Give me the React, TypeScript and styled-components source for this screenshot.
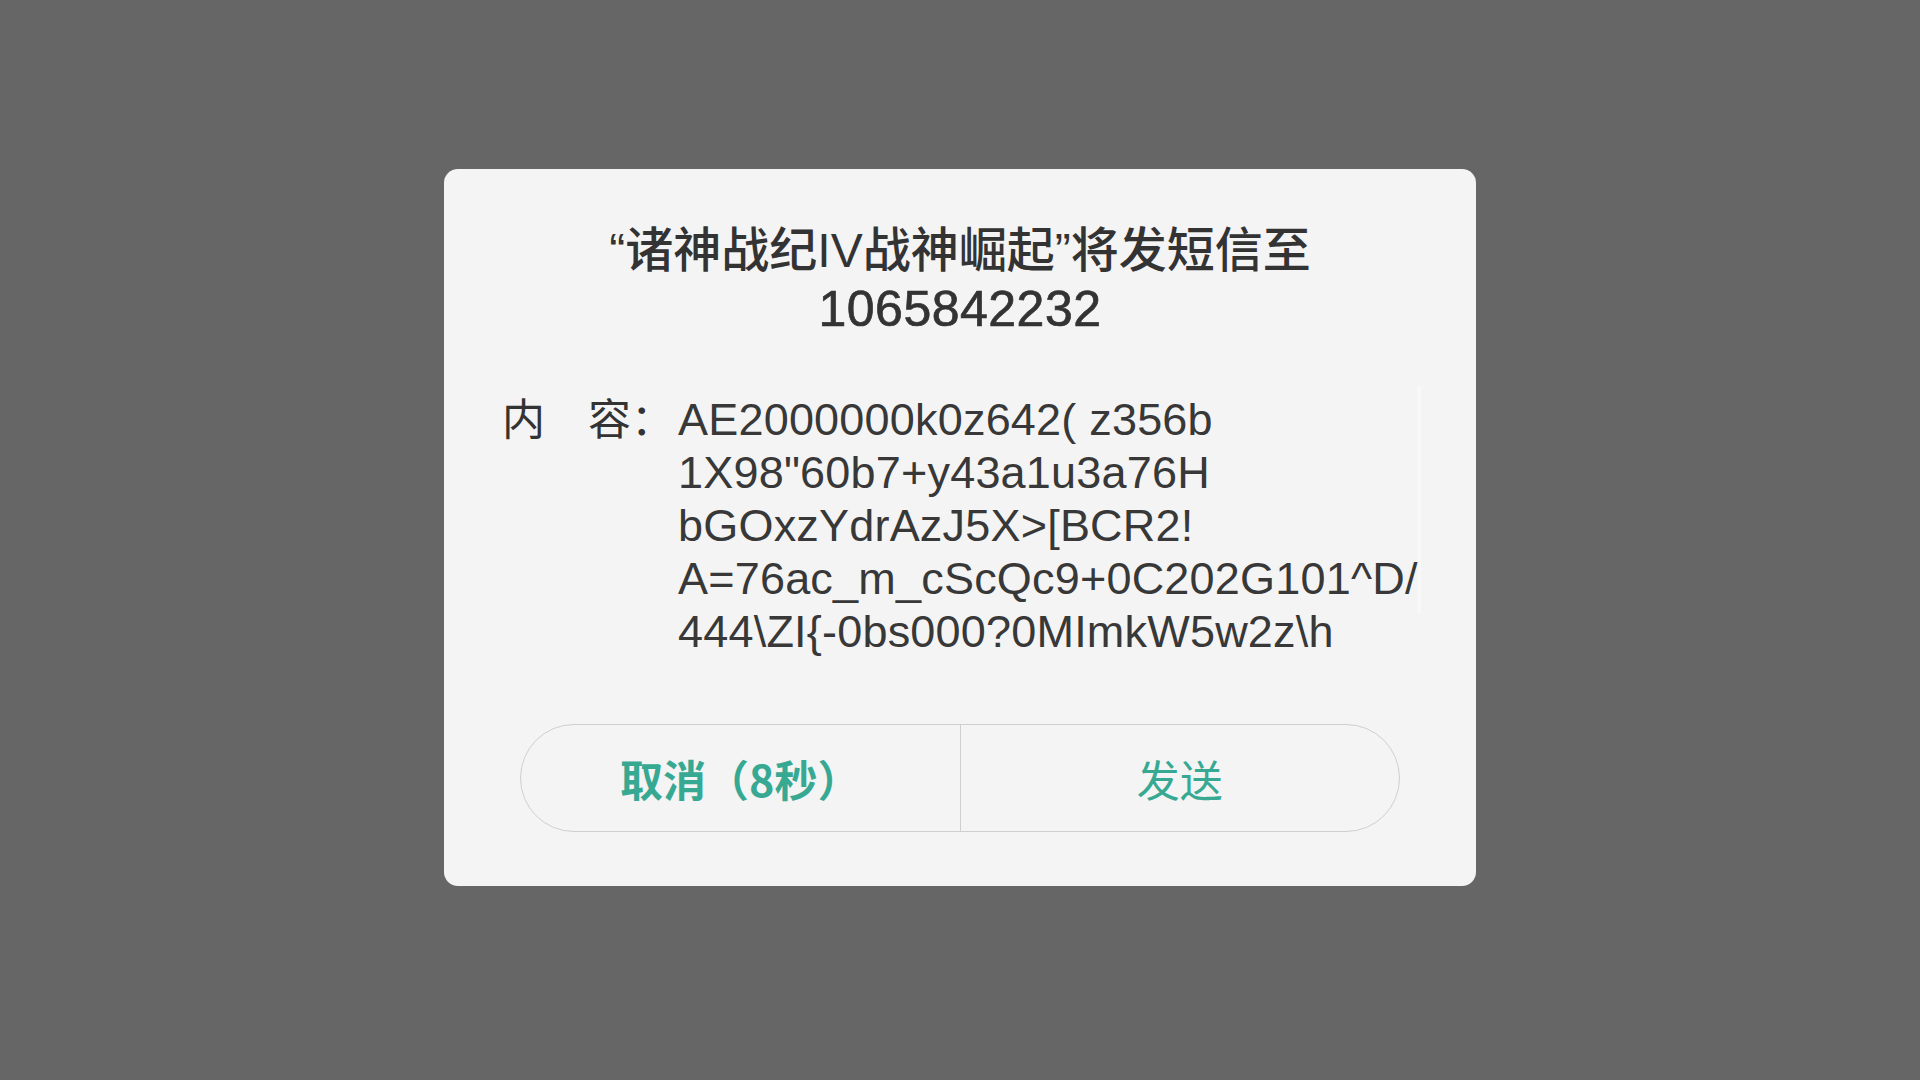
import React from "react";
import styled, { createGlobalStyle } from "styled-components";

const GlobalStyle = createGlobalStyle`
  html, body {
    margin: 0;
    padding: 0;
    background: #666666;
  }
  body {
    font-family: "Liberation Sans", "Noto Sans CJK SC", sans-serif;
  }
`;

const Backdrop = styled.div`
  width: 1920px;
  height: 1080px;
  background: #666666;
  display: flex;
  justify-content: center;
  align-items: flex-start;
  overflow: hidden;
`;

const Dialog = styled.div`
  margin-top: 169px;
  width: 1032px;
  height: 717px;
  box-sizing: border-box;
  padding: 53px 0 0;
  background: #f4f4f4;
  border-radius: 14px;
  display: flex;
  flex-direction: column;
  align-items: center;
`;

const Title = styled.h1`
  margin: 0;
  font-family: "Liberation Sans", "Noto Sans CJK SC", sans-serif;
  font-size: 48px;
  font-weight: 500;
  line-height: 58px;
  color: #333333;
  text-align: center;
`;

const Number = styled.span`
  display: block;
  font-size: 50px;
  letter-spacing: 0.5px;
  -webkit-text-stroke: 0.7px #333333;
`;

const Body = styled.div`
  position: relative;
  margin-top: 55px;
  width: 100%;
  box-sizing: border-box;
  padding-left: 58px;
  display: flex;
  align-items: flex-start;
`;

const Label = styled.div`
  flex: none;
  width: 176px;
  margin-top: -3px;
  font-family: "Noto Sans CJK SC", sans-serif;
  font-size: 43px;
  line-height: 53px;
  color: #333333;
  white-space: pre;
`;

const Content = styled.div`
  position: relative;
  z-index: 1;
  font-family: "Liberation Sans", "Noto Sans CJK SC", sans-serif;
  font-size: 45px;
  line-height: 53px;
  letter-spacing: 0.2px;
  color: #383838;
  white-space: pre;
`;

const ScrollTrack = styled.div`
  position: absolute;
  left: 973px;
  top: -7px;
  width: 4px;
  height: 227px;
  background: #f8f8f8;
`;

const ButtonBar = styled.div`
  margin-top: 66px;
  width: 880px;
  height: 108px;
  box-sizing: border-box;
  border: 1.5px solid #cfcfcf;
  border-radius: 54px;
  display: flex;
  overflow: hidden;
`;

const Action = styled.button<{ $bold?: boolean; $divider?: boolean }>`
  flex: 1;
  border: none;
  border-right: ${({ $divider }) => ($divider ? "1.5px solid #cfcfcf" : "none")};
  background: transparent;
  padding: 0;
  font-family: "Noto Sans CJK SC", sans-serif;
  font-size: 43px;
  font-weight: ${({ $bold }) => ($bold ? 700 : 400)};
  color: #37a993;
  cursor: pointer;
`;

const lines = [
  "AE2000000k0z642( z356b",
  '1X98"60b7+y43a1u3a76H',
  "bGOxzYdrAzJ5X>[BCR2!",
  "A=76ac_m_cScQc9+0C202G101^D/",
  "444\\ZI{-0bs000?0MImkW5w2z\\h",
];

export default function App() {
  return (
    <>
      <GlobalStyle />
      <Backdrop>
        <Dialog>
          <Title>
            “诸神战纪IV战神崛起”将发短信至
            <Number>1065842232</Number>
          </Title>
          <Body>
            <ScrollTrack />
            <Label>内　容：</Label>
            <Content>
              {lines.map((l) => (
                <div key={l}>{l}</div>
              ))}
            </Content>
          </Body>
          <ButtonBar>
            <Action $bold $divider>
              取消（8秒）
            </Action>
            <Action>发送</Action>
          </ButtonBar>
        </Dialog>
      </Backdrop>
    </>
  );
}
